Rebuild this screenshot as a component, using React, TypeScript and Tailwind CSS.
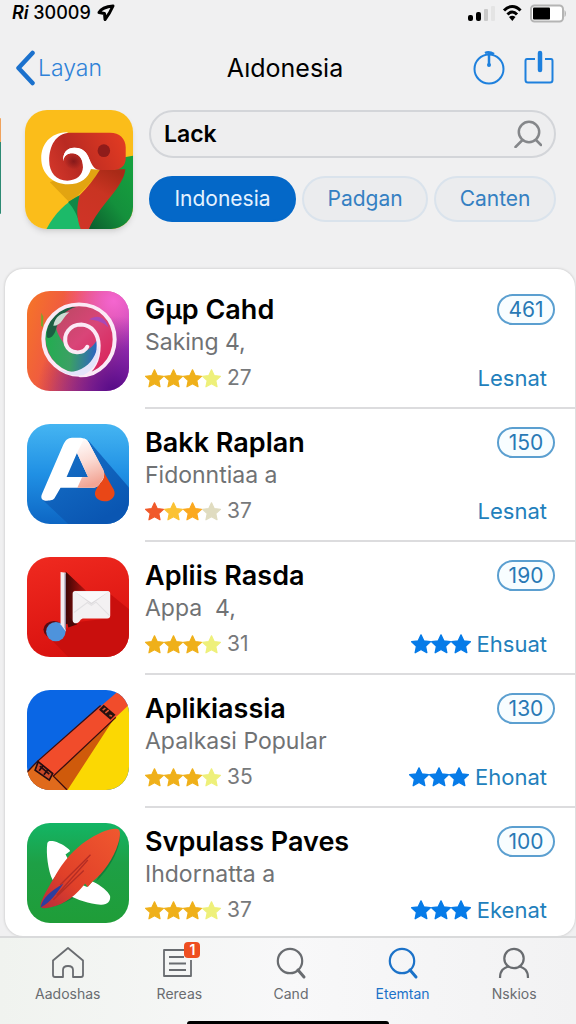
import React, { useState } from 'react';

const STAR_POINTS = '12,1.5 15.2,8.4 22.8,9.3 17.2,14.5 18.7,22 12,18.3 5.3,22 6.8,14.5 1.2,9.3 8.8,8.4';

function Star({ color, size = 20 }: { color: string; size?: number }) {
    return (
        <svg width={size} height={size} viewBox="0.5 0.5 23 23" aria-hidden="true">
            <polygon points={STAR_POINTS} fill={color} stroke={color} strokeWidth="1.5" strokeLinejoin="round" />
        </svg>
    );
}

/* APP ICONS */

function HeroIcon() {
    return (
        <svg viewBox="75 28 326 357" preserveAspectRatio="none" className="w-full h-full" aria-hidden="true">
            <defs>
                <linearGradient id="heroHead" x1="0" y1="0.6" x2="1" y2="0.3">
                    <stop offset="0" stopColor="#cf3529" />
                    <stop offset="0.3" stopColor="#b92a22" />
                    <stop offset="1" stopColor="#e03a22" />
                </linearGradient>
                <linearGradient id="heroNeck" x1="0.7" y1="0" x2="0.3" y2="1">
                    <stop offset="0" stopColor="#a92a17" />
                    <stop offset="0.4" stopColor="#c93422" />
                    <stop offset="1" stopColor="#cf3427" />
                </linearGradient>
                <linearGradient id="heroGreen" x1="0" y1="1" x2="0.8" y2="0">
                    <stop offset="0" stopColor="#0b5a2c" />
                    <stop offset="0.5" stopColor="#14903c" />
                    <stop offset="1" stopColor="#16a03f" />
                </linearGradient>
                <radialGradient id="heroCurl" cx="0.5" cy="0.5" r="0.5">
                    <stop offset="0" stopColor="#86191a" />
                    <stop offset="1" stopColor="#86191a" stopOpacity="0" />
                </radialGradient>
            </defs>
            <rect x="75" y="28" width="326" height="357" fill="#fbbd1a" />
            <path d="M150 245 L212 308 L310 208 L280 190 Z" fill="#e2a411" />
            <path d="M401 165 L375 170 L300 270 L262 385 H401 Z" fill="url(#heroGreen)" />
            <path d="M140 385 C165 338 196 308 240 284 L250 385 Z" fill="#1cba69" />
            <path d="M205 304 L240 284 L246 385 C236 350 222 322 205 304 Z" fill="#0f8847" />
            <path d="M302 206 H378 C372 262 300 312 268 385 H243 C228 350 232 312 240 284 C262 262 284 236 302 206 Z" fill="url(#heroNeck)" />
            <path d="M200 95 C150 97 124 132 124 173 C124 220 160 251 205 251 C244 251 266 232 274 205 L302 208 L290 130 Z" fill="#fff" />
            <path d="M210 96 H332 C360 96 379 114 379 140 V172 C379 195 365 208 340 208 H302 C262 206 280 141 224 141 C200 141 189 158 190 182 C192 164 205 157 220 158 C240 160 251 178 250 200 C249 224 230 240 203 240 C170 240 148 215 148 180 C148 135 168 98 210 96 Z" fill="url(#heroHead)" />
            <ellipse cx="222" cy="182" rx="28" ry="24" fill="url(#heroCurl)" />
            <path d="M190 182 C189 158 200 141 224 141 C258 141 266 165 272 185 L256 215 L250 200 C251 178 240 160 220 158 C205 157 192 164 190 182 Z" fill="#fff" />
            <circle cx="313" cy="150" r="19" fill="#8f1c1a" />
        </svg>
    );
}

function SwirlIcon() {
    return (
        <svg viewBox="81 73 306 307" preserveAspectRatio="none" className="w-full h-full" aria-hidden="true">
            <defs>
                <linearGradient id="swirlBg" x1="0" y1="0.2" x2="1" y2="0.5">
                    <stop offset="0" stopColor="#f5722a" />
                    <stop offset="0.4" stopColor="#ee5546" />
                    <stop offset="1" stopColor="#b23cc4" />
                </linearGradient>
                <radialGradient id="swirlPink" cx="0.85" cy="0.1" r="0.5">
                    <stop offset="0" stopColor="#f566d0" />
                    <stop offset="1" stopColor="#f566d0" stopOpacity="0" />
                </radialGradient>
                <radialGradient id="swirlPurple" cx="0.85" cy="1" r="0.75">
                    <stop offset="0" stopColor="#560b86" />
                    <stop offset="1" stopColor="#560b86" stopOpacity="0" />
                </radialGradient>
                <linearGradient id="swirlGreen" x1="0" y1="0.5" x2="1" y2="0.6">
                    <stop offset="0" stopColor="#21ae4f" />
                    <stop offset="0.5" stopColor="#3ba064" />
                    <stop offset="1" stopColor="#2c62c4" />
                </linearGradient>
                <linearGradient id="swirlRed" x1="0" y1="0" x2="1" y2="1">
                    <stop offset="0" stopColor="#b44a5d" />
                    <stop offset="0.5" stopColor="#d94578" />
                    <stop offset="1" stopColor="#d91d54" />
                </linearGradient>
            </defs>
            <rect x="81" y="73" width="306" height="307" fill="url(#swirlBg)" />
            <rect x="81" y="73" width="306" height="307" fill="url(#swirlPink)" />
            <rect x="81" y="73" width="306" height="307" fill="url(#swirlPurple)" />
            <circle cx="238" cy="223" r="104" fill="url(#swirlRed)" />
            <path d="M134 200 C136 290 190 330 250 328 C290 300 300 260 290 225 C270 262 225 275 196 240 C175 210 160 190 170 140 C150 155 138 175 134 200 Z" fill="url(#swirlGreen)" />
            <path d="M140 215 C138 160 175 120 228 122 C195 132 180 150 168 190 C164 210 150 222 140 215 Z" fill="#1c5f43" />
            <path d="M160 180 C165 150 185 138 208 138 C190 150 185 180 160 180 Z" fill="#cddcd4" />
            <path d="M268 160 C290 145 315 150 325 185 C305 165 290 165 268 160 Z" fill="#a848b8" />
            <path d="M124 140 L130 152 L129 185 L123 178 Z" fill="#79a62d" />
            <path d="M262 244 C250 268 210 268 198 238 C188 205 210 176 244 176 C278 178 296 208 296 240 C296 284 280 318 250 330 C186 336 130 284 130 220 C130 160 178 114 237 114 C300 114 344 160 344 222 C344 284 296 334 240 332" fill="none" stroke="#fbeaf6" strokeWidth="12" strokeLinecap="round" />
            <path d="M296 240 C300 280 286 312 250 332 C210 334 190 325 180 315 C225 332 266 308 284 270 Z" fill="#e4e4fa" />
        </svg>
    );
}

function LetterIcon() {
    return (
        <svg viewBox="82 42 304 304" preserveAspectRatio="none" className="w-full h-full" aria-hidden="true">
            <defs>
                <linearGradient id="letterBg" x1="0" y1="0" x2="0" y2="1">
                    <stop offset="0" stopColor="#45b5f2" />
                    <stop offset="0.5" stopColor="#2090e4" />
                    <stop offset="1" stopColor="#0d66c4" />
                </linearGradient>
                <linearGradient id="letterShade" x1="0" y1="0" x2="0.6" y2="1">
                    <stop offset="0" stopColor="#1774cb" />
                    <stop offset="1" stopColor="#0a56b2" />
                </linearGradient>
                <linearGradient id="letterFade" x1="0" y1="0" x2="0.2" y2="1">
                    <stop offset="0" stopColor="#ffffff" />
                    <stop offset="0.5" stopColor="#fbdcd5" />
                    <stop offset="1" stopColor="#f2a595" />
                </linearGradient>
            </defs>
            <rect x="82" y="42" width="304" height="304" fill="url(#letterBg)" />
            <path d="M265 92 L386 235 V346 H205 L128 272 L230 130 Z" fill="url(#letterShade)" />
            <path d="M312 190 L340 240 C350 260 334 277 313 277 C292 277 280 262 286 246 Z" fill="#e94717" />
            <path
                fillRule="evenodd"
                d="M190 105 C202 80 212 84 236 84 C256 84 262 90 270 106 L308 180 C316 200 310 210 301 220 C292 236 286 236 270 236 H182 L166 264 C160 276 150 275 136 275 C124 273 122 264 128 252 Z M231 130 L200 203 H264 Z"
                fill="#fff"
            />
            <path d="M252 86 C264 90 268 100 272 110 L310 182 C316 198 310 208 301 220 C292 236 286 236 270 236 H232 L246 204 L264 203 L231 130 Z" fill="url(#letterFade)" />
        </svg>
    );
}

function MusicIcon() {
    return (
        <svg viewBox="82 39 304 299" preserveAspectRatio="none" className="w-full h-full" aria-hidden="true">
            <defs>
                <linearGradient id="musicBg" x1="0" y1="0" x2="0.3" y2="1">
                    <stop offset="0" stopColor="#f02a20" />
                    <stop offset="1" stopColor="#d9120f" />
                </linearGradient>
                <linearGradient id="musicShade" x1="0" y1="0" x2="1" y2="0">
                    <stop offset="0" stopColor="#3d0504" />
                    <stop offset="1" stopColor="#b51310" />
                </linearGradient>
            </defs>
            <rect x="82" y="39" width="304" height="299" fill="url(#musicBg)" />
            <path d="M330 150 L386 195 V338 H205 L160 292 L220 235 L330 222 Z" fill="#c90f0d" />
            <path d="M197 82 L258 140 H222 V235 L197 240 Z" fill="url(#musicShade)" />
            <path d="M197 210 L232 240 L205 250 Z" fill="#4c0807" />
            <ellipse cx="162" cy="256" rx="31" ry="26" fill="#5b0b12" />
            <ellipse cx="168" cy="262" rx="29" ry="29" fill="#4e93dc" />
            <path d="M182 84 L198 86 V262 L182 240 Z" fill="#f4eef2" />
            <path d="M194 86 L198 88 V260 L194 250 Z" fill="#8c7f96" />
            <path d="M226 141 H322 Q330 141 330 149 V214 Q330 223 321 223 H248 Q242 225 238 232 Q234 239 224 237 Q218 236 218 228 V149 Q218 141 226 141 Z" fill="#f3f1f2" />
            <path d="M224 142 L274 181 L326 142 Z" fill="#dcdadc" />
            <path d="M224 142 L274 176 L326 142 Z" fill="#faf9fa" />
            <path d="M222 205 L262 175 L274 184 L288 174 L328 214" fill="none" stroke="#e2e0e2" strokeWidth="3" />
        </svg>
    );
}

function BandIcon() {
    return (
        <svg viewBox="82 47 302 303" preserveAspectRatio="none" className="w-full h-full" aria-hidden="true">
            <rect x="82" y="47" width="302" height="303" fill="#0a66e4" />
            <path d="M384 90 V350 H195 L330 130 Z" fill="#fbd803" />
            <path d="M345 125 L202 350 H82 V290 L160 305 Z" fill="#cf5a0b" />
            <path d="M82 295 V350 H200 L160 308 L110 270 Z" fill="#e06a1c" />
            <path d="M350 52 L384 60 V92 L160 308 L112 262 Z" fill="#f14c2b" />
            <path d="M345 130 L160 308 L200 349 M82 296 L112 264 L300 94" fill="none" stroke="#3b0d10" strokeWidth="4" />
            <path d="M115 264 L158 300 L148 320 L106 290 Z" fill="#c94a28" stroke="#240c10" strokeWidth="5" />
            <path d="M120 278 L148 302 M130 276 L118 292 M144 288 L132 304" stroke="#240c10" strokeWidth="5" />
            <path d="M309 92 L344 122 L329 137 L295 107 Z" fill="#26110f" />
            <path d="M306 108 L314 102 M314 116 L324 108 M326 124 L334 126" stroke="#d9552f" strokeWidth="5" />
        </svg>
    );
}

function BoardIcon() {
    return (
        <svg viewBox="82 53 302 289" preserveAspectRatio="none" className="w-full h-full" aria-hidden="true">
            <defs>
                <linearGradient id="boardBg" x1="0" y1="0" x2="0" y2="1">
                    <stop offset="0" stopColor="#13b565" />
                    <stop offset="0.4" stopColor="#1ea046" />
                    <stop offset="1" stopColor="#1f9d38" />
                </linearGradient>
                <linearGradient id="board" x1="1" y1="0" x2="0" y2="1">
                    <stop offset="0" stopColor="#f0582f" />
                    <stop offset="0.65" stopColor="#e04029" />
                    <stop offset="1" stopColor="#b72c3c" />
                </linearGradient>
            </defs>
            <rect x="82" y="53" width="302" height="289" fill="url(#boardBg)" />
            <path d="M357 80 C362 150 290 240 210 275 C170 295 140 300 125 298 L280 235 Z" fill="#12803a" />
            <path d="M142 112 C144 104 152 104 162 106 C184 112 202 124 210 134 L196 144 L204 158 L158 218 C144 190 138 140 142 112 Z" fill="#fff" />
            <path d="M204 260 L246 232 L260 238 L276 222 C302 234 322 250 328 264 C330 280 320 290 300 289 C266 286 230 275 204 260 Z" fill="#fff" />
            <path d="M350 70 C360 72 359 92 352 112 C338 156 310 196 276 222 L262 238 L254 228 C232 256 196 290 150 297 C134 300 120 302 122 290 C126 270 142 245 160 215 C190 160 226 126 256 106 C290 82 330 66 350 70 Z" fill="url(#board)" />
            <path d="M122 297 C130 268 150 252 190 228 C170 256 150 285 122 297 Z" fill="#2c3f9f" />
            <path d="M270 145 L180 232 M262 160 L170 262 M250 190 L160 275" stroke="#b52d24" strokeWidth="4" fill="none" />
        </svg>
    );
}

/* STATUS + TAB ICONS */

function StatusIcons() {
    return (
        <svg width="100" height="22" viewBox="466 2 100 22" aria-hidden="true">
            <rect x="468" y="15" width="5" height="6" rx="2" fill="#000" />
            <rect x="476" y="12" width="5" height="9" rx="2" fill="#000" />
            <rect x="484" y="9" width="4" height="12" rx="1" fill="#c9c9c9" />
            <rect x="491" y="6" width="4" height="15" rx="1" fill="#e4e4e4" />
            <g fill="none" stroke="#000" strokeWidth="3">
                <path d="M504 10.5 C509 5.2 515.5 5.2 520.5 10.5" />
                <path d="M507.5 14.5 C510.5 11.2 514 11.2 517 14.5" />
            </g>
            <path d="M509 17 Q512.3 14.5 515.5 17 L512.3 21 Z" fill="#000" />
            <rect x="531" y="5.5" width="32" height="16" rx="3.5" fill="#fff" stroke="#b4b4b4" strokeWidth="2" />
            <rect x="533" y="7.5" width="17" height="12" rx="1" fill="#000" />
            <path d="M564.5 10 Q566 11 566 13.5 Q566 16 564.5 17 Z" fill="#b4b4b4" />
        </svg>
    );
}

function HomeIcon() {
    return (
        <svg width="34" height="34" viewBox="0 0 34 34" fill="none" stroke="currentColor" strokeWidth="1.8" strokeLinejoin="round" aria-hidden="true">
            <path d="M2 14.5 L17 2 L32 14.5 V29 Q32 31 30 31 H22 V24 Q22 20 17 20 Q12 20 12 24 V31 H4 Q2 31 2 29 Z" />
        </svg>
    );
}

function ListIcon() {
    return (
        <svg width="34" height="34" viewBox="0 0 34 34" fill="none" stroke="currentColor" strokeWidth="1.8" aria-hidden="true">
            <path d="M23 4 H2 V30 H29 V14" strokeLinejoin="round" />
            <path d="M7 11 H22 M7 17.5 H24 M7 24 H24" strokeWidth="2" />
        </svg>
    );
}

function SearchIcon() {
    return (
        <svg width="34" height="34" viewBox="0 0 34 34" fill="none" stroke="currentColor" strokeWidth="2.2" strokeLinecap="round" aria-hidden="true">
            <circle cx="16" cy="15" r="12.2" />
            <path d="M24 24 L30 31" strokeWidth="3" />
        </svg>
    );
}

function PersonIcon() {
    return (
        <svg width="34" height="34" viewBox="0 0 34 34" fill="none" stroke="currentColor" strokeWidth="2.2" aria-hidden="true">
            <circle cx="17" cy="12.5" r="9.7" />
            <path d="M3 32 C3 24 7 22 11 20.5 M31 32 C31 24 27 22 23 20.5" />
        </svg>
    );
}

const GOLD = ['#efb01a', '#efb01a', '#efb01a', '#eef07a'];

const APPS = [
    { name: 'Gµp Cahd', sub: 'Saking 4,', count: 27, price: '461', action: 'Lesnat', featured: false, stars: GOLD, Icon: SwirlIcon },
    { name: 'Bakk Raplan', sub: 'Fidonntiaa a', count: 37, price: '150', action: 'Lesnat', featured: false, stars: ['#f0592a', '#fbc233', '#fba81f', '#e0dcc0'], Icon: LetterIcon },
    { name: 'Apliis Rasda', sub: 'Appa  4,', count: 31, price: '190', action: 'Ehsuat', featured: true, stars: GOLD, Icon: MusicIcon },
    { name: 'Aplikiassia', sub: 'Apalkasi Popular', count: 35, price: '130', action: 'Ehonat', featured: true, stars: GOLD, Icon: BandIcon },
    { name: 'Svpulass Paves', sub: 'Ihdornatta a', count: 37, price: '100', action: 'Ekenat', featured: true, stars: GOLD, Icon: BoardIcon },
];

const CHIPS = ['Indonesia', 'Padgan', 'Canten'];

const TABS = [
    { label: 'Aadoshas', Icon: HomeIcon, badge: 0 },
    { label: 'Rereas', Icon: ListIcon, badge: 1 },
    { label: 'Cand', Icon: SearchIcon, badge: 0 },
    { label: 'Etemtan', Icon: SearchIcon, badge: 0 },
    { label: 'Nskios', Icon: PersonIcon, badge: 0 },
];

export default function App() {

    const [query, setQuery] = useState('Lack');
    const [chip, setChip] = useState('Indonesia');
    const [tab, setTab] = useState('Etemtan');

    return (
        <div className="min-h-screen flex flex-col bg-[#f0f0f1] text-black font-['Inter','Liberation_Sans',sans-serif] overflow-x-hidden">

            {/* STATUS BAR */}
            <div className="h-[26px] pl-3 pr-[10px] flex items-center justify-between">
                <div className="flex items-center gap-[6px] text-lg leading-6 font-medium">
                    <span><i className="font-semibold">Ri</i> 30009</span>
                    <svg width="18" height="18" viewBox="0 0 18 18" aria-hidden="true">
                        <path d="M2 8.5 Q5 3 16 2 Q13 9 8 15.5 L7.5 9.5 Z" fill="none" stroke="#000" strokeWidth="3" strokeLinejoin="round" />
                    </svg>
                </div>
                <StatusIcons />
            </div>

            {/* NAV */}
            <header className="h-[84px] grid grid-cols-[1fr_auto_1fr] items-center pl-4 pr-[22px]">
                <a href="#back" className="flex items-center gap-[3px] text-[23px] leading-8 font-light text-[#2f82d8]">
                    <svg width="19" height="36" viewBox="0 0 19 36" aria-hidden="true">
                        <path d="M16.5 3 L2.5 18 L16.5 33" fill="none" stroke="#1b71cd" strokeWidth="4.5" strokeLinecap="round" strokeLinejoin="round" />
                    </svg>
                    Layan
                </a>
                <h1 className="text-[25px] leading-8">Aıdonesia</h1>
                <div className="flex justify-end gap-[18px] text-[#1e80dd]">
                    <button aria-label="Timer">
                        <svg width="34" height="36" viewBox="0 0 34 36" fill="none" stroke="currentColor" strokeWidth="2" aria-hidden="true">
                            <circle cx="17" cy="19" r="14.5" />
                            <path d="M13 3 Q17 1 22 4 M17 2 V15" strokeWidth="2.5" />
                            <circle cx="17" cy="15" r="1" />
                        </svg>
                    </button>
                    <button aria-label="Share">
                        <svg width="30" height="36" viewBox="0 0 30 36" fill="none" stroke="currentColor" strokeWidth="2" aria-hidden="true">
                            <path d="M11 9 H3 Q1.5 9 1.5 11 V30 Q1.5 32.5 4 32.5 H26 Q28.5 32.5 28.5 30 V11 Q28.5 9 27 9 H21" />
                            <path d="M16 3 V20" strokeWidth="4.5" strokeLinecap="round" />
                        </svg>
                    </button>
                </div>
            </header>

            {/* SEARCH */}
            <section className="flex gap-4 pr-5 pb-10">
                <div className="flex gap-6">
                    <div className="w-px h-24 mt-2 rounded-r bg-linear-to-b from-[#f0a25c] from-25% to-[#2c8a73] to-25%" />
                    <div className="w-[108px] h-[119px] rounded-[22px] overflow-hidden shadow-md">
                        <HeroIcon />
                    </div>
                </div>
                <div className="flex-1 min-w-0 flex flex-col gap-[18px]">
                    <div className="h-12 pl-[13px] pr-3 flex items-center rounded-full border-2 border-[#d3d5d9] bg-[#eeeeef]">
                        <input
                            type="text"
                            aria-label="Search"
                            value={query}
                            onChange={(e) => setQuery(e.target.value)}
                            className="flex-1 min-w-0 h-9 bg-transparent outline-none text-[23px] font-semibold"
                        />
                        <svg width="28" height="28" viewBox="0 0 28 28" fill="none" stroke="#85878a" strokeWidth="2.5" strokeLinecap="round" aria-hidden="true">
                            <circle cx="15" cy="12" r="10.2" />
                            <path d="M8.5 20 L1.5 27 M22 20 L27 25" />
                        </svg>
                    </div>
                    <div className="flex gap-[6px]">
                        {CHIPS.map((c) => (
                            <button
                                key={c}
                                onClick={() => setChip(c)}
                                className={`h-[46px] px-5 flex-auto rounded-full border-2 text-[21px] leading-7 ${chip === c
                                        ? 'bg-[#0468c8] text-[#e4f2ff] border-[#0468c8]'
                                        : 'bg-[#ebecee] text-[#3580c2] border-[#dae3ec]'
                                    }`}
                            >
                                {c}
                            </button>
                        ))}
                    </div>
                </div>
            </section>

            {/* APP LIST */}
            <ul className="ml-[5px] mr-px pt-[7px] bg-white rounded-[18px] shadow-[0_0_3px_rgba(0,0,0,0.22)]">
                {APPS.map(({ Icon, ...app }, idx) => (
                    <li key={app.name} className="flex gap-4 pl-[22px]">

                        <div className="shrink-0 w-[102px] h-[100px] mt-[15px] mb-[13px] rounded-[23px] overflow-hidden">
                            <Icon />
                        </div>

                        <div className={`flex-1 min-w-0 flex justify-between pt-[18px] pr-5 ${idx < APPS.length - 1 ? 'pb-[13px] border-b-2 border-[#dcdcde]' : 'pb-[10px]'}`}>
                            <div>
                                <h2 className="text-[27px] leading-8 font-semibold whitespace-nowrap">{app.name}</h2>
                                <p className="text-[23px] leading-8 text-[#707274] whitespace-pre">{app.sub}</p>
                                <div className="flex items-center gap-[6px] mt-1">
                                    <div className="flex">
                                        {app.stars.map((color, i) => <Star key={i} color={color} size={19} />)}
                                    </div>
                                    <span className="text-[21px] leading-8 text-[#77797b]">{app.count}</span>
                                </div>
                            </div>

                            <div className="flex flex-col items-end justify-between">
                                <button className="h-[31px] w-[58px] rounded-full border-2 border-[#5b9fd0] bg-[#f8fdff] text-[21px] leading-6 text-[#2879b5]">
                                    {app.price}
                                </button>
                                <a href="#app" className="flex items-center gap-[6px] pr-2 text-[22px] leading-8 text-[#227fbc]">
                                    {app.featured && (
                                        <span className="flex">
                                            <Star color="#067be8" />
                                            <Star color="#067be8" />
                                            <Star color="#067be8" />
                                        </span>
                                    )}
                                    {app.action}
                                </a>
                            </div>
                        </div>

                    </li>
                ))}
            </ul>

            {/* TAB BAR */}
            <nav className="mt-auto border-t-2 border-[#d9dadb] bg-linear-to-r from-[#f0f3ef] via-[#f8f8f9] to-[#f2f2f3]">
                <div className="flex pl-3 pr-[6px] pt-2 pb-[17px]">
                    {TABS.map(({ label, Icon, badge }) => (
                        <button
                            key={label}
                            onClick={() => setTab(label)}
                            className={`flex-1 flex flex-col items-center gap-1 ${tab === label ? 'text-[#1c72c8]' : 'text-[#696c70]'}`}
                        >
                            <span className="relative">
                                <Icon />
                                {badge > 0 && (
                                    <span className="absolute -top-1 -right-1 w-4 h-4 rounded bg-[#ee4e20] text-white text-sm leading-4 font-semibold">
                                        {badge}
                                    </span>
                                )}
                            </span>
                            <span className="text-sm leading-5">{label}</span>
                        </button>
                    ))}
                </div>
                <div className="w-[35%] h-[3px] mx-auto rounded-t bg-black" />
            </nav>

        </div>
    );
}
